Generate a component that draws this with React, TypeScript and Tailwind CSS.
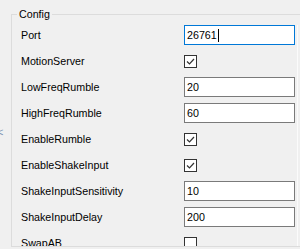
import React from "react";

type Row =
  | { label: string; kind: "text"; value: string; focused?: boolean }
  | { label: string; kind: "check"; checked: boolean };

const rows: Row[] = [
  { label: "Port", kind: "text", value: "26761", focused: true },
  { label: "MotionServer", kind: "check", checked: true },
  { label: "LowFreqRumble", kind: "text", value: "20" },
  { label: "HighFreqRumble", kind: "text", value: "60" },
  { label: "EnableRumble", kind: "check", checked: true },
  { label: "EnableShakeInput", kind: "check", checked: true },
  { label: "ShakeInputSensitivity", kind: "text", value: "10" },
  { label: "ShakeInputDelay", kind: "text", value: "200" },
  { label: "SwapAB", kind: "check", checked: false },
];

function CheckBox({ checked }: { checked: boolean }) {
  return (
    <div className="w-[13px] h-[13px] border border-[#333333] bg-white flex items-center justify-center">
      {checked && (
        <svg width="11" height="11" viewBox="0 0 11 11">
          <polyline
            points="2,5.5 4.5,8 9,3"
            fill="none"
            stroke="#333333"
            strokeWidth="1.2"
          />
        </svg>
      )}
    </div>
  );
}

export default function App() {
  return (
    <div
      className="relative w-[300px] h-[249px] bg-[#f0f0f0] overflow-hidden pt-[14px] pl-[11px] text-[10.7px] text-black leading-none"
      style={{ fontFamily: '"Liberation Sans", Arial, sans-serif' }}
    >
      <span className="absolute left-[-3px] top-[127px] text-[11px] text-[#7f95b3]">&lt;</span>
      <div className="relative w-[300px] h-[233px] border-t border-l border-b border-[#dcdcdc]">
        <span className="absolute left-[5px] top-[-7px] bg-[#f0f0f0] px-[2px] leading-[13px]">
          Config
        </span>
        <div className="flex h-full overflow-hidden">
          <div className="w-[285px] flex flex-col pt-[7px]">
            {rows.map((r) => (
              <div key={r.label} className="flex items-center h-[26px] shrink-0">
                <div className="w-[172px] pl-[9px]">{r.label}</div>
                {r.kind === "text" ? (
                  <div
                    className={
                      r.focused
                        ? "w-[111px] h-[20px] bg-white border border-[#0078d7] flex items-center pl-[2px]"
                        : "w-[111px] h-[20px] bg-white border border-[#7a7a7a] flex items-center pl-[2px]"
                    }
                  >
                    <span>{r.value}</span>
                    {r.focused && <span className="inline-block w-[1px] h-[13px] bg-black ml-[1px]" />}
                  </div>
                ) : (
                  <CheckBox checked={r.checked} />
                )}
              </div>
            ))}
          </div>
          <div className="w-[1px] mt-[10px] bg-[#fbfbfb]" />
        </div>
      </div>
    </div>
  );
}
